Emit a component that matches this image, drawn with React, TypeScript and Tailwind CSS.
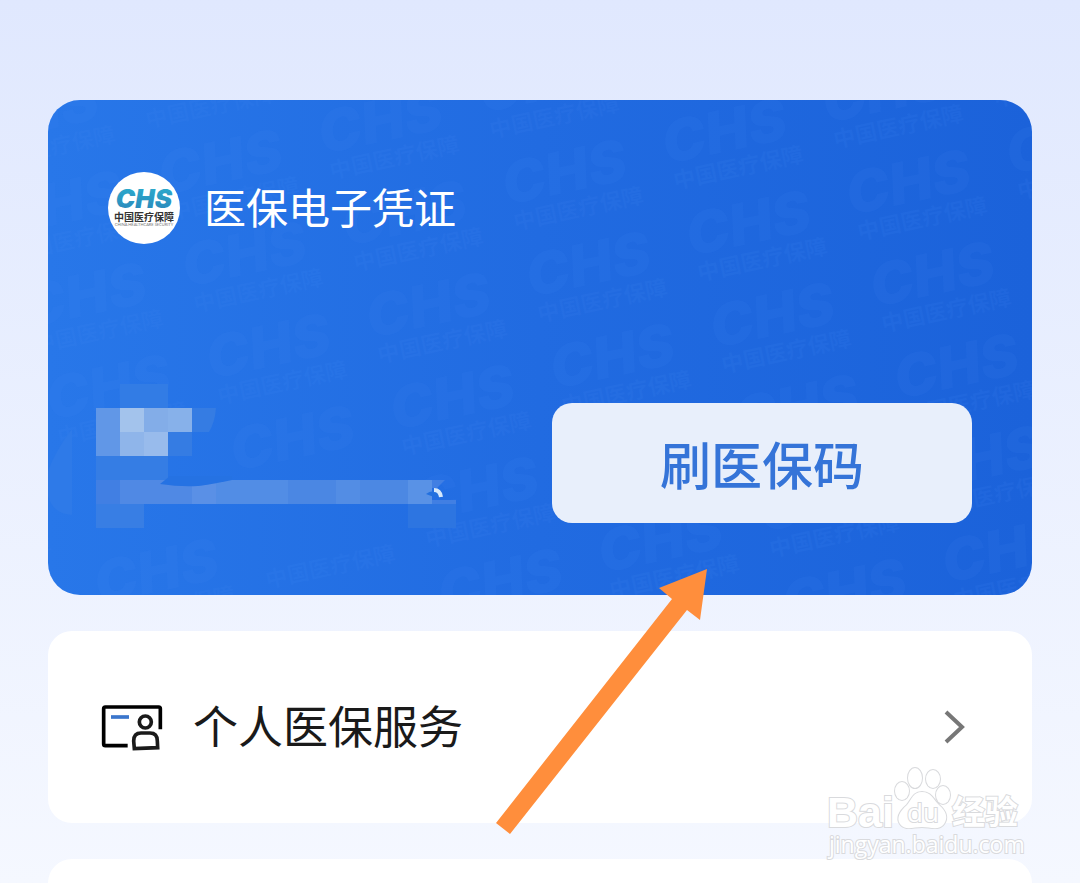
import React from 'react';

interface Point {
  x: number;
  y: number;
}

interface MosaicCell extends Point {
  w?: number;
  h?: number;
  fill: string;
}

// The emblem repeats on a slanted grid across the card.
const emblemPoints: Point[] = [];
for (let col = -6; col <= 4; col++) {
  for (let row = -3; row <= 8; row++) {
    const x = 620 + col * 160 + row * 24;
    const y = 64 - col * 41 + row * 92;
    if (x > -150 && x < 984 && y > -24 && y < 530) {
      emblemPoints.push({ x, y });
    }
  }
}

// The masked block hides the parts of the pattern that lie under it.
const hidesMark = (p: Point) => p.x < 250 && p.y > 380 && p.y < 475;
const hidesCaption = (p: Point) => p.x < 250 && p.y > 340 && p.y < 430;

const mosaic: MosaicCell[] = [
  { x: 72, y: 0, w: 48, fill: '#327ce5' },
  { x: 48, y: 24, h: 48, fill: '#6197e7' },
  { x: 72, y: 24, fill: '#a3c3ec' },
  { x: 96, y: 24, fill: '#83ade8' },
  { x: 120, y: 24, fill: '#87b1ea' },
  { x: 72, y: 48, fill: '#8fb5ea' },
  { x: 96, y: 48, fill: '#98bbec' },
  { x: 120, y: 48, fill: '#357ce3' },
  { x: 48, y: 72, w: 72, fill: '#357de4' },
  { x: 48, y: 96, fill: '#417fe3' },
  { x: 72, y: 96, w: 72, fill: '#5089e4' },
  { x: 144, y: 96, fill: '#5a90e6' },
  { x: 168, y: 96, w: 72, fill: '#528de5' },
  { x: 240, y: 96, w: 48, fill: '#4b87e3' },
  { x: 288, y: 96, fill: '#538de4' },
  { x: 312, y: 96, w: 48, fill: '#4c88e3' },
  { x: 360, y: 96, fill: '#5992e6' },
  { x: 48, y: 120, w: 48, fill: '#387ee4' },
  { x: 360, y: 120, w: 48, fill: '#2d75e1' },
];

const CardPattern: React.FC = () => (
  <svg
    className="absolute inset-0 h-full w-full"
    viewBox="0 0 984 495"
    preserveAspectRatio="xMidYMid slice"
    aria-hidden="true"
  >
    {emblemPoints.map((p) => (
      <g key={`${p.x},${p.y}`} transform={`translate(${p.x} ${p.y}) rotate(-12)`} fill="#4389f5">
        {!hidesMark(p) && (
          <text x="-1" y="0" fillOpacity="0.1" className="font-['Inter'] text-[58px] font-black italic">CHS</text>
        )}
        {!hidesCaption(p) && (
          <text x="2" y="26" fillOpacity="0.12" className="font-['Noto_Sans_CJK_SC',sans-serif] text-[22px] font-bold">中国医疗保障</text>
        )}
      </g>
    ))}
  </svg>
);

const Emblem: React.FC = () => (
  <svg className="size-[72px] shrink-0" viewBox="0 0 72 72" role="img" aria-label="中国医疗保障">
    <defs>
      <linearGradient id="emblem" x1="0" y1="0" x2="0" y2="1">
        <stop offset="0" stopColor="#2cb0cf" />
        <stop offset="1" stopColor="#2b84b9" />
      </linearGradient>
    </defs>
    <circle cx="36" cy="36" r="36" fill="#fff" />
    <text x="36" y="36" textAnchor="middle" fill="url(#emblem)" className="font-['Inter'] text-[26px] font-black italic">CHS</text>
    <text x="36" y="49" textAnchor="middle" fill="#333" className="font-['Noto_Sans_CJK_SC',sans-serif] text-[10px] font-bold">中国医疗保障</text>
    <text x="36" y="54" textAnchor="middle" fill="#777" className="font-['Lato'] text-[4px]">CHINA HEALTHCARE SECURITY</text>
  </svg>
);

const MaskedInfo: React.FC = () => (
  <svg className="h-[139px] w-[408px] shrink-0 overflow-visible" viewBox="0 0 408 139" aria-hidden="true">
    <path d="M24 45V131Q5 130 0 112V87Q8 66 24 45Z" fill="#2e7ae8" />
    {mosaic.map((c) => (
      <rect key={`${c.x},${c.y}`} x={c.x} y={c.y} width={c.w ?? 24} height={c.h ?? 24} fill={c.fill} />
    ))}
    <path d="M144 24H168Q167 38 161 48H144Z" fill="#357ce3" />
    <path d="M112 100L122 92H184V96Q160 101 150 102Q132 103 112 100Z" fill="#2572e3" />
    <path d="M384 96H397L389 104H384ZM384 116H408V120H384Z" fill="#417fe3" />
    <path d="M378 110Q384 105 391 109L393 113Q386 114 378 110Z" fill="#2270df" />
    <path d="M386 106Q392 106 393 113" fill="none" stroke="#d5e8fb" strokeWidth="4" />
  </svg>
);

const PersonCardIcon: React.FC = () => (
  <svg className="h-[50px] w-[65px] shrink-0" viewBox="60 68 195 150" fill="none" aria-hidden="true">
    <path d="M143 199H76Q71 199 71 194V88Q71 83 76 83H236Q241 83 241 88V150" stroke="#000" strokeWidth="11" />
    <path d="M93 113H147" stroke="#3b76cc" strokeWidth="11" />
    <circle cx="196" cy="128" r="18" stroke="#1a1a1a" strokeWidth="11" />
    <path d="M163 208L161 185Q161 161 183 161H210Q232 161 232 185L233 205Z" stroke="#1a1a1a" strokeWidth="11" />
  </svg>
);

const PointerArrow: React.FC = () => (
  <svg className="pointer-events-none absolute left-[496px] top-[569px] h-[265px] w-[212px]" viewBox="0 0 212 265" aria-hidden="true">
    <path d="M211 0L163 19L176 30L0 254L14 265L191 41L204 51Z" fill="#ff8e3c" />
  </svg>
);

const SiteMark: React.FC = () => (
  <svg
    className="pointer-events-none absolute bottom-[19px] right-[54px] h-[100px] w-[200px]"
    viewBox="0 0 200 100"
    fill="#fff"
    stroke="#d9dadd"
    strokeWidth="2"
    paintOrder="stroke"
    role="img"
    aria-label="Baidu 经验"
  >
    <text x="1" y="63" className="font-['Liberation_Sans'] text-[43px] font-bold">Bai</text>
    <ellipse cx="89" cy="14" rx="7" ry="10" />
    <ellipse cx="107" cy="15" rx="7" ry="9" />
    <ellipse cx="76" cy="27" rx="7" ry="9" />
    <ellipse cx="117" cy="31" rx="7" ry="9" />
    <path d="M96 28C105 28 107 35 113 41C121 48 122 54 118 60C113 67 104 63 96 63C87 63 79 67 74 60C70 54 74 47 81 41C86 35 87 28 96 28Z" />
    <text x="81" y="58" className="font-['Open_Sans'] text-[26px]">du</text>
    <text x="126" y="60" className="font-['Noto_Sans_CJK_SC',sans-serif] text-[33px] font-bold">经验</text>
    <text x="3" y="89" className="font-['Open_Sans'] text-[23px]">jingyan.baidu.com</text>
  </svg>
);

const App: React.FC = () => {
  return (
    <main className="relative h-screen overflow-hidden bg-linear-to-b from-[#e0e8fe] to-[#f5f8ff] px-12 pt-[100px] font-['Noto_Sans_CJK_SC',sans-serif]">
      <div className="flex flex-col gap-9">
        <section className="relative overflow-hidden rounded-[32px] bg-linear-to-r from-[#2877e9] via-[#216be1] to-[#1b62da] py-[72px]">
          <CardPattern />
          <div className="relative">
            <header className="flex items-center gap-6 px-[60px]">
              <Emblem />
              <h1 className="pb-1 text-[42px] leading-[68px] text-white">医保电子凭证</h1>
            </header>
            <div className="mt-[140px] flex items-end justify-between pr-[60px]">
              <MaskedInfo />
              <button type="button" className="h-[120px] w-[420px] rounded-[20px] bg-[#e8effb] text-[51px] font-medium text-[#3574d8]">
                刷医保码
              </button>
            </div>
          </div>
        </section>

        <a href="#services" className="flex h-48 items-center rounded-3xl bg-white pl-[52px] pr-[66px]">
          <PersonCardIcon />
          <span className="ml-7 flex-1 pb-1 text-[45px] text-[#1a1a1a]">个人医保服务</span>
          <svg className="h-9 w-6" viewBox="0 0 24 36" fill="none" aria-hidden="true">
            <path d="M4 3L20 18L4 33" stroke="#777" strokeWidth="4" />
          </svg>
        </a>

        <div className="h-48 rounded-3xl bg-white" />
      </div>

      <PointerArrow />
      <SiteMark />
    </main>
  );
};

export default App;
